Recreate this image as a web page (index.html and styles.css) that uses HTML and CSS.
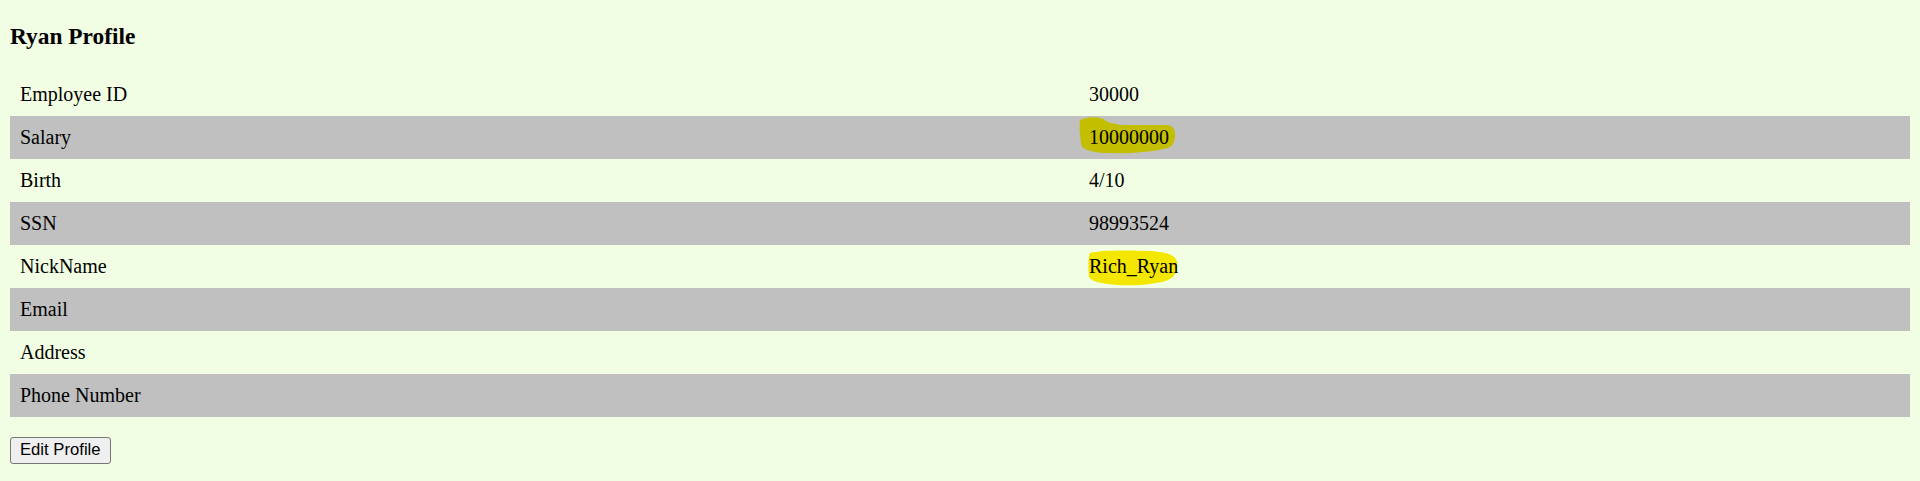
FILE: index.html
```html
<!DOCTYPE html>
<html>
<head>
<meta charset="utf-8">
<title>Ryan Profile</title>
<link rel="stylesheet" href="styles.css">
</head>
<body>
<h3 class="title">Ryan Profile</h3>
<table class="profile">
  <colgroup><col class="col-label"><col class="col-value"></colgroup>
  <tr><td>Employee ID</td><td>30000</td></tr>
  <tr class="alt"><td>Salary</td><td><span class="mark"><svg class="blob blob-olive" width="96" height="37" viewBox="0 0 96 37"><path d="M1,3 C6,0 18,-1 24,2 C30,6 36,8 50,8 L88,8 C95,9 97,14 96,20 C95,28 92,31 84,32 C70,35 50,37 30,36 C18,36 8,34 3,30 C1,22 0,10 1,3 Z"/></svg><span class="mark-text">10000000</span></span></td></tr>
  <tr><td>Birth</td><td>4/10</td></tr>
  <tr class="alt"><td>SSN</td><td>98993524</td></tr>
  <tr><td>NickName</td><td><span class="mark"><svg class="blob blob-yellow" width="90" height="36" viewBox="0 0 90 36"><path d="M2,3 C10,0 40,0 62,1 C78,2 88,5 89,12 C90,20 88,26 80,30 C70,34 50,36 30,35 C15,34 4,32 1,27 C0,18 0,8 2,3 Z"/></svg><span class="mark-text">Rich_Ryan</span></span></td></tr>
  <tr class="alt"><td>Email</td><td></td></tr>
  <tr><td>Address</td><td></td></tr>
  <tr class="alt"><td>Phone Number</td><td></td></tr>
</table>
<div class="actions"><button class="btn">Edit Profile</button></div>
</body>
</html>
```
FILE: styles.css
```css
html, body {
  background: #f2fee4;
}
body {
  margin: 10px;
  font-family: "Liberation Serif", "Times New Roman", serif;
  font-size: 20px;
  color: #000;
}
.title {
  font-size: 23.4px;
  font-weight: bold;
  margin: 13.4px 0 22.4px;
}
.profile {
  width: 1900px;
  border-collapse: collapse;
  table-layout: fixed;
}
.col-label { width: 1069px; }
.profile td {
  padding: 10px;
  height: 23px;
  line-height: 23px;
  vertical-align: middle;
  white-space: nowrap;
}
.profile tr.alt td {
  background: #c0c0c0;
}
.mark {
  position: relative;
  display: inline-block;
}
.mark-text {
  position: relative;
  z-index: 1;
}
.blob {
  position: absolute;
  z-index: 0;
}
.blob-olive {
  left: -10px;
  top: -9px;
}
.blob-olive path { fill: #c4be00; }
.blob-yellow {
  left: -1px;
  top: -5px;
}
.blob-yellow path { fill: #f3e700; }
.actions {
  margin-top: 20px;
}
.btn {
  font-family: "Liberation Sans", Arial, sans-serif;
  font-size: 16.67px;
  height: 27px;
  padding: 0 9px;
  background: #efefef;
  border: 1px solid #767676;
  border-radius: 3px;
  color: #000;
}
```
